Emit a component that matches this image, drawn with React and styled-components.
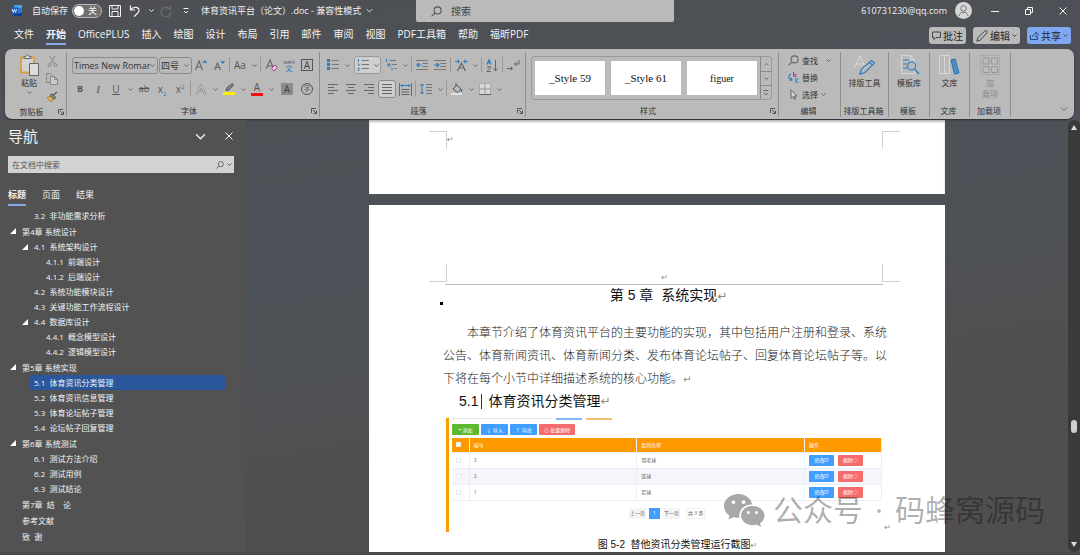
import styled, { createGlobalStyle } from 'styled-components';

const GlobalStyle = createGlobalStyle`
  * {
    box-sizing: border-box;
  }

  body {
    margin: 0;
    font-family: "Open Sans", "Noto Sans CJK SC", sans-serif;
    font-size: 8px;
    color: #222;
    background: #4e5256;
  }

  button, input, select {
    margin: 0;
    padding: 0;
    border: 0;
    background: none;
    font: inherit;
    color: inherit;
  }
`

/* ---------- window ---------- */

const Window = styled.div`
  display: flex;
  flex-direction: column;
  height: 100vh;
  overflow: hidden;
  background: linear-gradient(170deg, #4d4f54 0%, #4d5258 45%, #504f4f 75%, #504e4e 100%);
`

const TitleBar = styled.header`
  display: grid;
  grid-template-columns: 416px minmax(100px, 258px) 1fr;
  height: 22px;
  color: #f2f2f2;
  font-size: 9px;
  line-height: 20px;
`

const TitleSide = styled.div`
  display: flex;
  align-items: center;
  height: 21px;
  padding-left: 11px;
  white-space: nowrap;
`

const TitleEnd = styled(TitleSide)`
  justify-content: flex-end;
  gap: 8px;
`

const PlainButton = styled.button`
  display: flex;
  align-items: center;
  justify-content: center;
  width: ${({ $w }) => $w || 12}px;
  height: 16px;
  flex: none;
`

const AutoSave = styled.label`
  display: flex;
  align-items: center;
  gap: 4px;
  margin: 0 6px 0 10px;
`

const Switch = styled.span`
  display: flex;
  align-items: center;
  gap: 4px;
  width: 30px;
  height: 14px;
  padding-left: 1px;
  border: 1px solid #b8b8b8;
  border-radius: 7px;
  background: #6f6f6f;

  input {
    appearance: none;
    width: 10px;
    height: 10px;
    border-radius: 50%;
    background: #fff;
  }
`

const DocName = styled.span`
  margin: 0 5px 0 7px;
`

const TitleSearch = styled.label`
  display: flex;
  align-items: center;
  gap: 9px;
  padding-left: 15px;
  background: #bababa;
  border-radius: 0 0 2px 2px;
  color: #555;

  input {
    flex: 1;
    min-width: 0;
    font-size: 10px;
  }

  input::placeholder {
    color: #444;
    opacity: 1;
  }
`

const Avatar = styled.span`
  display: flex;
  width: 17px;
  height: 17px;
  border-radius: 50%;
  background: #d6d6d6;
`

const WindowButtons = styled.div`
  display: flex;
  gap: 12px;
  padding: 0 6px 0 4px;
`

/* ---------- tabs ---------- */

const MenuBar = styled.nav`
  display: flex;
  align-items: center;
  height: 27px;
  padding: 0 9px 0 14px;
`

const MenuTabs = styled.div`
  display: flex;
  flex: 1;
  gap: 12px;
`

const MenuTab = styled.button`
  height: 18px;
  padding-bottom: 2px;
  border-bottom: 2px solid ${({ $active }) => ($active ? '#86a9e6' : 'transparent')};
  color: #f5f5f5;
  font-size: 10px;
  font-weight: ${({ $active }) => ($active ? 700 : 400)};
  line-height: 14px;
  white-space: nowrap;
`

const MenuActions = styled.div`
  display: flex;
  gap: 7px;
`

const ActionButton = styled.button`
  display: flex;
  align-items: center;
  justify-content: center;
  gap: 2px;
  height: 17px;
  padding: 0 3px;
  border-radius: 3px;
  background: ${({ $primary }) => ($primary ? '#80a8f0' : '#bababa')};
  font-size: 10px;
  line-height: 16px;
  white-space: nowrap;

  svg {
    color: #444;
  }
`

/* ---------- ribbon ---------- */

const Ribbon = styled.section`
  display: flex;
  flex: none;
  height: 70px;
  margin: 0 6px 1px 5px;
  padding: 3px 0 2px;
  border-radius: 7px;
  background: #bababa;
  box-shadow: 0 1px 2px rgba(0, 0, 0, .5);
  color: #333;

  svg {
    color: #666;
  }
`

const Group = styled.div`
  display: flex;
  flex-direction: column;
  flex: none;
  width: ${({ $w }) => $w}px;
  padding-left: ${({ $pad }) => $pad || 0}px;
  border-right: 1px solid #8f8f8f;
`

const GroupBody = styled.div`
  flex: 1;
  display: flex;
  flex-direction: ${({ $column }) => ($column ? 'column' : 'row')};
`

const GroupLabel = styled.div`
  display: flex;
  align-items: center;
  height: 12px;
  padding-right: 2px;
  margin-left: -${({ $pad }) => $pad || 0}px;
  line-height: 12px;

  span {
    flex: 1;
    text-align: center;
    white-space: nowrap;
  }
`

const PasteButton = styled.button`
  display: flex;
  flex-direction: column;
  align-items: center;
  gap: 1px;
  width: 32px;
  padding-top: 2px;
  line-height: 12px;
`

const ToolStack = styled.div`
  display: flex;
  flex-direction: column;
`

const ToolRow = styled.div`
  display: flex;
  align-items: center;
  height: ${({ $h }) => $h || 24}px;
  margin-top: ${({ $top }) => $top || 0}px;
`

const Tool = styled.button`
  display: flex;
  align-items: center;
  justify-content: center;
  flex: none;
  width: ${({ $w }) => $w || 18}px;
  height: 18px;
  color: #555;
  font-size: 10px;
  line-height: 14px;

  sub, sup {
    color: #2b7cc0;
    font-size: 6px;
    line-height: 6px;
  }
`

const SplitTool = styled.div`
  display: flex;
  align-items: center;
  flex: none;
  margin: ${({ $on }) => ($on ? '0 1px 0 2px' : '0')};
  border-radius: 3px;
  background: ${({ $on }) => ($on ? '#cfcfcf' : 'none')};
  outline: ${({ $on }) => ($on ? '1px solid #999' : 'none')};
  outline-offset: -1px;
`

const PressedTool = styled(Tool)`
  border: 1px solid #8a8a8a;
  border-radius: 3px;
  background: #cfcfcf;
`

const Sep = styled.span`
  width: 1px;
  height: 16px;
  margin: 0 1px;
  background: #999;
`

const Combo = styled.label`
  display: flex;
  align-items: center;
  width: ${({ $w }) => $w}px;
  height: 17px;
  margin-left: 1px;
  padding: 0 2px 0 1px;
  border: 1px solid #8a8a8a;
  border-radius: 3px;

  select {
    appearance: none;
    flex: 1;
    min-width: 0;
    height: 15px;
    font-size: 9px;
    line-height: 15px;
    color: #333;
  }
`

const Glyph = styled.span`
  font-size: ${({ $size }) => $size || 11}px;
  font-weight: ${({ $bold }) => ($bold ? 700 : 400)};
  font-style: ${({ $italic }) => ($italic ? 'italic' : 'normal')};
  font-family: ${({ $serif }) => ($serif ? '"Liberation Serif", serif' : 'inherit')};
  text-decoration: ${({ $deco }) => $deco || 'none'};
`

const FontColor = styled.span`
  width: 12px;
  border-bottom: 3px solid #f01414;
  line-height: 11px;
`

const ShadedA = styled.span`
  width: 12px;
  height: 12px;
  background: ${({ $boxed }) => ($boxed ? 'none' : '#8c8c8c')};
  border: ${({ $boxed }) => ($boxed ? '1px solid #555' : '0')};
  color: #444;
  line-height: ${({ $boxed }) => ($boxed ? 10 : 12)}px;
`

const Pinyin = styled.span`
  display: flex;
  flex-direction: column;
  font-size: 6px;
  line-height: 6px;

  b {
    color: #2b7cc0;
    font-size: 7px;
    font-weight: 400;
    line-height: 7px;
  }
`

const Circled = styled.span`
  width: 12px;
  height: 12px;
  border: 1px solid #555;
  border-radius: 50%;
  font-size: 7px;
  line-height: 10px;
`

const Gallery = styled.div`
  display: flex;
  gap: 6px;
  height: 44px;
  margin-top: 4px;
  padding-left: 3px;
  border: 1px solid #999;
  border-radius: 3px;
`

const StyleCard = styled.button`
  width: 70px;
  height: 34px;
  margin-top: 4px;
  background: #fff;
  color: #111;
  font-family: "Liberation Serif", serif;
  font-size: ${({ $size }) => $size || 11}px;
`

const GalleryScroll = styled.div`
  display: grid;
  grid-template-rows: repeat(3, 1fr);
  width: 11px;
  margin-left: -3px;
  border-left: 1px solid #888;

  button {
    display: flex;
    align-items: center;
    justify-content: center;
  }

  button + button {
    border-top: 1px solid #888;
  }
`

const EditButton = styled.button`
  display: flex;
  align-items: center;
  gap: 3px;
  height: 17px;
  line-height: 16px;
`

const BigTool = styled.button`
  display: flex;
  flex-direction: column;
  align-items: center;
  gap: 2px;
  width: 100%;
  padding-top: 3px;
  color: ${({ disabled }) => (disabled ? '#8a8a8a' : '#333')};
  line-height: 11px;
  white-space: pre-line;
`

const RibbonEnd = styled.div`
  display: flex;
  flex: 1;
  align-items: flex-end;
  justify-content: flex-end;
  padding-right: 4px;
`

/* ---------- navigation pane ---------- */

const Workspace = styled.div`
  display: flex;
  flex: 1;
  min-height: 0;
`

const NavPane = styled.aside`
  flex: none;
  width: 246px;
  background: #525252;
  color: #f2f2f2;
`

const NavHead = styled.div`
  display: flex;
  align-items: center;
  height: 32px;
  padding: 0 11px 0 8px;
  gap: 17px;

  h2 {
    flex: 1;
    margin: 0;
    font-size: 15px;
    font-weight: 400;
    line-height: 20px;
  }
`

const NavSearch = styled.label`
  display: flex;
  align-items: center;
  gap: 3px;
  height: 17px;
  margin: 4px 12px 0 8px;
  padding: 0 2px 0 4px;
  background: #d3d3d3;
  color: #555;

  input {
    flex: 1;
    min-width: 0;
  }

  input::placeholder {
    color: #555;
    opacity: 1;
  }
`

const NavTabs = styled.div`
  display: flex;
  gap: 16px;
  padding: 13px 8px 0;
`

const NavTab = styled.button`
  height: 20px;
  padding-bottom: 1px;
  border-bottom: 2px solid ${({ $active }) => ($active ? '#86a9e6' : 'transparent')};
  font-size: 9px;
  font-weight: ${({ $active }) => ($active ? 700 : 400)};
  line-height: 14px;
`

const Outline = styled.ul`
  margin: 2px 20px 0 0;
  padding: 0;
  list-style: none;
`

const OutlineItem = styled.li`
  display: flex;
  align-items: center;
  height: ${({ $level }) => ($level === 0 ? 16 : 15)}px;
  margin-left: ${({ $level }) => 8 + $level * 12}px;
  background: linear-gradient(${({ $active }) => ($active ? '#2a569c, #2a569c' : 'transparent, transparent')}) 10px 0 no-repeat;

  a {
    color: inherit;
    line-height: 15px;
    text-decoration: none;
    white-space: pre;
  }
`

const Twisty = styled.span`
  display: flex;
  width: 14px;
  padding-left: 2px;
`

/* ---------- document ---------- */

const Canvas = styled.main`
  position: relative;
  display: flex;
  flex-direction: column;
  align-items: center;
  flex: 1;
  gap: 11px;
  min-width: 0;
  overflow: hidden;
`

const Page = styled.article`
  flex: none;
  width: 100%;
  max-width: 576px;
  background: #fff;
  color: #111;
`

const FirstPage = styled(Page)`
  height: 74px;
  padding-top: 11px;
  box-shadow: inset 0 2px 2px #bbb;
`

const SecondPage = styled(Page)`
  padding-top: 59px;
`

const MarginMarks = styled.div`
  display: flex;
  justify-content: space-between;
  align-items: ${({ $bottom }) => ($bottom ? 'flex-end' : 'center')};
  height: 18px;
  padding: 0 45px 0 60px;
`

const Corner = styled.span`
  width: 18px;
  height: 18px;
  border: 0 solid #d0d0d0;
  border-top-width: ${({ $v }) => ($v === 'top' ? 1 : 0)}px;
  border-bottom-width: ${({ $v }) => ($v === 'bottom' ? 1 : 0)}px;
  border-left-width: ${({ $h }) => ($h === 'left' ? 1 : 0)}px;
  border-right-width: ${({ $h }) => ($h === 'right' ? 1 : 0)}px;
`

const Return = styled.span`
  color: #8a8a8a;
  font-family: "DejaVu Sans", sans-serif;
  font-size: ${({ $size }) => $size || 8}px;
  font-weight: 400;
  line-height: 8px;
`

const CornerGroup = styled.div`
  display: flex;
  align-items: center;
`

const Content = styled.div`
  margin: 2px 62px 0 76px;
  border-top: 1px solid #bbb;
`

const Chapter = styled.h1`
  position: relative;
  margin: 0 0 16px;
  padding-left: 9px;
  font-family: "Liberation Sans", "Noto Sans CJK SC", sans-serif;
  font-size: 14px;
  font-weight: 400;
  line-height: 20px;
  text-align: center;
  white-space: pre;

  &::before {
    content: "";
    position: absolute;
    left: -5px;
    bottom: 0;
    width: 3px;
    height: 3px;
    background: #000;
  }
`

const Paragraph = styled.p`
  margin: 0 -6px 0 -2px;
  color: #222;
  font-size: 12px;
  font-weight: 300;
  line-height: 23px;
  text-indent: 24px;
  white-space: pre-line;
`

const Section = styled.h2`
  display: flex;
  align-items: center;
  height: 22px;
  margin: 0 0 6px;
  padding-left: 14px;
  font-family: "Liberation Sans", "Noto Sans CJK SC", sans-serif;
  font-size: 14px;
  font-weight: 400;
  line-height: 20px;
`

const Caret = styled.span`
  width: 1px;
  height: 15px;
  margin: 0 6px 0 3px;
  background: #333;
`

const Figure = styled.figure`
  margin: 0;
`

const FigureRow = styled.div`
  display: flex;
  align-items: flex-end;
  margin: 0 -8px 0 1px;
`

const AdminShot = styled.div`
  flex: 1;
  height: 114px;
  margin-right: 2px;
  padding-left: 3px;
  border-left: 3px solid #f90;
  color: #666;
  font-size: 5px;
  line-height: 6px;
`

const ShotTop = styled.div`
  display: flex;
  gap: 4px;
  height: 2px;

  i {
    width: 26px;
    background: #7db9f8;
  }

  i:first-child {
    width: 100px;
    border-top: 1px solid #e4e4e4;
    background: none;
  }

  i:last-child {
    background: #efc06d;
  }
`

const ShotButtons = styled.div`
  display: flex;
  gap: 2px;
  margin: 4px 0 3px;
`

const RowButtons = styled.div`
  display: flex;
  gap: 4px;
`

const ShotButton = styled.button`
  width: ${({ $w }) => $w}px;
  height: 11px;
  border-radius: 1px;
  background: ${({ $color }) => $color};
  color: #fff;
  white-space: nowrap;
`

const ShotTable = styled.table`
  width: 100%;
  table-layout: fixed;
  border-collapse: collapse;

  th, td {
    height: 16px;
    padding: 0 4px;
    border: 0 solid #ebeef5;
    border-right-width: 1px;
    border-bottom-width: 1px;
    text-align: left;
    font-weight: 400;
  }

  th {
    height: 14px;
    background: #f90;
    color: #fff;
  }

  tbody tr:nth-child(even) {
    background: #f4f6fb;
  }

  input {
    display: block;
    appearance: none;
    width: 5px;
    height: 5px;
    border: 1px solid #ececec;
    background: #fff;
  }
`

const Pager = styled.div`
  display: flex;
  justify-content: center;
  gap: 3px;
  margin-top: 7px;

  button, span {
    height: 11px;
    padding: 0 1px;
    background: #f4f4f5;
    line-height: 11px;
  }

  button[aria-current] {
    width: 11px;
    background: #409eff;
    color: #fff;
  }

  span {
    margin-left: 3px;
    border: 1px solid #f0f0f0;
    background: #fff;
    line-height: 9px;
  }
`

const Caption = styled.figcaption`
  height: 20px;
  padding: 5px 0 0 27px;
  font-family: "Liberation Sans", "Noto Sans CJK SC", sans-serif;
  font-size: 10px;
  line-height: 16px;
  text-align: center;
  white-space: pre;
`

const Watermark = styled.div`
  position: absolute;
  right: 23px;
  bottom: 20px;
  display: flex;
  align-items: center;
  gap: 12px;
  color: rgba(0, 0, 0, .32);
  font-size: 30px;
  line-height: 44px;
  white-space: nowrap;

  svg {
    margin-right: -4px;
  }
`

const ScrollBar = styled.div`
  display: flex;
  flex-direction: column;
  align-items: center;
  justify-content: space-between;
  flex: none;
  width: 12px;
  border-radius: 6px;
  background: #3a3a3a;
`

const Track = styled.div`
  display: grid;
  grid-template-rows: 285fr 13px 103fr;
  flex: 1;

  i {
    grid-row: 2;
    width: 6px;
    border-radius: 3px;
    background: #cfcfcf;
  }
`

const StatusEdge = styled.footer`
  flex: none;
  height: 3px;
  background: #4b4949;
`

/* ---------- icons ---------- */

const Svg = ({ w = 12, h, box, children, ...rest }) => (
  <svg
    width={w}
    height={h || w}
    viewBox={box || `0 0 ${w} ${h || w}`}
    fill="none"
    stroke="currentColor"
    aria-hidden="true"
    {...rest}
  >
    {children}
  </svg>
)

const Chevron = ({ w = 5, ...rest }) => (
  <Svg w={w} box="0 0 10 10" strokeWidth={w > 6 ? 1.2 : 2} {...rest}><path d="M1 3l4 4 4-4" /></Svg>
)

const Search = ({ w = 10 }) => (
  <Svg w={w} box="0 0 10 10"><circle cx="6" cy="4" r="3.2" /><path d="M3.7 6.3L.5 9.5" /></Svg>
)

const Close = ({ w = 8 }) => <Svg w={w} box="0 0 8 8"><path d="M.5.5l7 7M7.5.5l-7 7" /></Svg>

const WordLogo = () => (
  <Svg w={11} stroke="none">
    <path d="M3 0h8v11H3z" fill="#2b7cd3" />
    <path d="M3 0h8v3H3z" fill="#41a5ee" />
    <path d="M3 8h8v3H3z" fill="#103f91" />
    <path d="M0 2.5h7v6.5H0z" fill="#185abd" />
    <path d="M1.2 4l1 3.4L3.4 4.3l1.2 3.1 1-3.4" stroke="#fff" strokeWidth=".8" />
  </Svg>
)

const Save = () => (
  <Svg w={12}><path d="M.5.5h11v11H.5zM3 .5v3.500h6V.5M3 11.500v-5h6v5" /></Svg>
)

const Undo = () => <Svg w={12}><path d="M1.5.5v4.5H6M1.5 5C4 1.5 10 1.500 10 5.500 10 8 7 9.500 5 11.500" strokeWidth="1.2" /></Svg>

const Redo = () => <Svg w={12} stroke="#6c6e71"><path d="M10.500.5V4H7M10 4A5 5 0 1 0 11 6.500" strokeWidth="1.2" /></Svg>

const Person = () => (
  <Svg w={17} stroke="#777"><circle cx="8.500" cy="6.500" r="2.800" /><path d="M4 14c.5-5 8.500-5 9 0" /></Svg>
)

const Clipboard = () => (
  <Svg w={20} h={22}>
    <path d="M2 3.500h13v15H2z" fill="#d3d3d3" stroke="#d9a24a" strokeWidth="2" />
    <path d="M5 4.500V2.500h2C7 .5 10 .5 10 2.500h2v2z" fill="#ddd" stroke="#666" />
    <path d="M10.500 9.500h9v12h-9z" fill="#dcdcdc" stroke="#666" />
  </Svg>
)

const Scissors = () => (
  <Svg w={11} stroke="#888"><path d="M3 0l4.500 8M8 0L3.500 8" /><circle cx="2.500" cy="9" r="1.500" /><circle cx="8.500" cy="9" r="1.500" /></Svg>
)

const Copy = () => (
  <Svg w={12} stroke="#888"><path d="M4 9.500H.5v-9H5L7 2.500" /><path d="M4.500 3.500h4l3 3v5h-7zM8.500 3.500v3h3" fill="#ccc" /></Svg>
)

const Brush = () => (
  <Svg w={12}>
    <path d="M1 6.500l3.500-1.500 3 3L5 11z" fill="#e7b45c" stroke="#a8803c" />
    <path d="M4.500 4.500l1.500-1.500 3.500 3.500L8 8zM7.500 4L11 1" stroke="#555" strokeWidth="1.100" />
  </Svg>
)

const Launcher = () => (
  <Svg w={6} stroke="#555"><path d="M.5 5V.5H5M2 2l3 3M5.500 2.500v3h-3" /></Svg>
)

const Highlighter = () => (
  <Svg w={12}>
    <path d="M0 9h12v3H0z" fill="#ffec00" stroke="none" />
    <path d="M3 7.500l1-3L9.500.5l1 1.500L6 7z" fill="#888" stroke="#555" />
  </Svg>
)

const ClearFormat = () => (
  <Svg w={13}>
    <path d="M1 10L5 1l3 7M2.500 7H7" strokeWidth="1.100" />
    <path d="M6.500 9.500l3.500-3.500 2.500 2-3.500 4z" fill="#e7c9e0" stroke="#b2408c" />
  </Svg>
)

const SizedA = ({ up }) => (
  <Svg w={12}>
    <path d={up ? 'M.5 11L4 2l3.500 9M2 8h4' : 'M1.500 11L4.500 4l3 7M2.500 8.500h4'} strokeWidth="1.100" />
    <path d={up ? 'M8 4l1.800-2L11.500 4' : 'M8 2l1.800 2L11.500 2'} stroke="#2b7cc0" strokeWidth="1.200" />
  </Svg>
)

const List = ({ numbered }) => (
  <Svg w={12}>
    <path d="M4.500 1.500H12M4.500 5.500H12M4.500 9.500H12" stroke="#777" />
    {numbered
      ? <path d="M1.500 0v3M.5 5h1.500v2M.5 9h1.500v2.500H.5" stroke="#2b7cc0" />
      : <path d="M0 0h3v3H0zM0 4h3v3H0zM0 8h3v3H0z" fill="#2b7cc0" stroke="none" />}
  </Svg>
)

const MultiLevel = () => (
  <Svg w={12}>
    <path d="M4.500 1.500H11M7 5.500h5M9.500 9.500H12" stroke="#777" />
    <path d="M1.500 0v3M3 5h2v2H3zM7 8.500v3" stroke="#2b7cc0" />
  </Svg>
)

const Indent = ({ out }) => (
  <Svg w={12}>
    <path d="M0 1.500h12M6.500 4.500H12M6.500 7.500H12M0 10.500h12" stroke="#777" />
    <path d={out ? 'M5.500 6H1M3 4L1 6l2 2' : 'M0 6h4.500M2.800 4l2 2-2 2'} stroke="#2b7cc0" strokeWidth="1.200" />
  </Svg>
)

const AsianLayout = () => (
  <Svg w={13}>
    <path d="M2.500 12l4-8 4 8M4 9h5" strokeWidth="1.200" />
    <path d="M0 2.500h4M2.500.5l2 2-2 2M13 2.500H9M10.500.5l-2 2 2 2" stroke="#2b7cc0" />
  </Svg>
)

const Sort = () => (
  <Svg w={12} h={13}>
    <path d="M1 5.500L3 .8l2 4.700M1.800 4h2.500" stroke="#2b7cc0" strokeWidth="1.200" />
    <path d="M1 8h4l-4 4.500h4M9.500 1v11M7.500 9.500l2 2.500 2-2.500" />
  </Svg>
)

const Marks = () => (
  <Svg w={13}><path d="M0 9.500h5.500M3.500 7.500l2 2-2 2M12 1v4H7.500M9.500 3l-2 2 2 2" /></Svg>
)

const Lines = ({ d, w = 12 }) => <Svg w={w}><path d={d} stroke="#666" /></Svg>

const Distribute = () => (
  <Svg w={13}>
    <path d="M.5 0v13M12.500 0v13M2 2.500h9M3.500 1L2 2.500 3.500 4M9.500 1L11 2.500 9.500 4" stroke="#2b7cc0" />
    <path d="M2.500 6.500h8M2.500 9h8M2.500 11.500h8" stroke="#666" />
  </Svg>
)

const LineSpacing = () => (
  <Svg w={12}>
    <path d="M2 .8v10.400M.3 3L2 1l1.700 2M.3 9L2 11l1.700-2" stroke="#2b7cc0" />
    <path d="M6 1.500h6M6 4.500h6M6 7.500h6M6 10.500h6" stroke="#777" />
  </Svg>
)

const Bucket = () => (
  <Svg w={12}>
    <path d="M2 6l4-4 4 4-3.500 3.500zM5 0v3" stroke="#555" />
    <path d="M10.500 6v3" stroke="#2b7cc0" strokeWidth="1.500" />
    <path d="M0 10h11v2H0z" fill="#dedede" stroke="none" />
  </Svg>
)

const Borders = () => (
  <Svg w={12}>
    <path d="M.5.5h11v11H.5z" fill="#d8d8d8" stroke="#aaa" />
    <path d="M6 .5v11M.5 6h11" stroke="#999" />
    <path d="M0 11.500h12" stroke="#666" />
  </Svg>
)

const Replace = () => (
  <Svg w={11}>
    <path d="M5.500 0v4.500h2.500V2.500H5.500" stroke="#b2408c" />
    <path d="M3 2C0 3 0 7 3 8M1.500 8.500L4 8 3 5.500M10.500 7H8v3h2.500" stroke="#2b7cc0" strokeWidth="1.200" />
  </Svg>
)

const Pointer = () => <Svg w={11}><path d="M3 .8v8.700l2-2 1.500 3 1.200-.6L6.300 7H9z" fill="#d5d5d5" /></Svg>

const TypesetIcon = () => (
  <Svg w={21} h={20}>
    <path d="M.5 13L6 .8 11.500 13M2.500 9h7" stroke="#dadada" />
    <path d="M6 19l1.500-5L17.500 5.500l3 2.500L11 17.500zM15.500 7.500l3 2.500" stroke="#2b7cc0" strokeWidth="1.200" />
  </Svg>
)

const TemplateIcon = () => (
  <Svg w={21} h={20}>
    <path d="M2.500.5h9l4 4v14h-13zM11.500.5v4h4" stroke="#d6d6d6" />
    <path d="M4 5h6M4 9h4M4 13h4" stroke="#2b7cc0" strokeWidth="1.200" />
    <circle cx="12.500" cy="11" r="4" stroke="#2b7cc0" strokeWidth="1.200" />
    <path d="M15.500 14l4.500 5" stroke="#2b7cc0" strokeWidth="1.400" />
  </Svg>
)

const LibraryIcon = () => (
  <Svg w={21} h={20}>
    <path d="M.5.5h5v18h-5zM5.500.5h5v18h-5z" stroke="#d6d6d6" />
    <path d="M12 5l4-1 4 14-4.500 1z" fill="#4a90d0" stroke="#2b6ca8" />
  </Svg>
)

const AddinIcon = () => (
  <Svg w={20}>
    <path d="M.5.5h19v19H.5z" stroke="#aaa" />
    <path d="M3 3h6v6H3zM11.500 3h6v6h-6zM3 11.500h6v6H3zM11.500 11.500h6v6h-6z" stroke="#999" />
  </Svg>
)

const CommentIcon = () => <Svg w={9}><path d="M.5 1h8v5.500H4L2 8.500v-2H.5z" /></Svg>
const PencilIcon = () => <Svg w={12}><path d="M.8 11.200l1-3.500L9 .8c1-1 3 1 2 2L4.300 10.200z" /></Svg>
const ShareIcon = () => <Svg w={9}><path d="M.5 4v4.500h7V6M2.500 6C3 3.500 4.500 3 6 3V1l2.700 2.800L6 6.200V4.500" stroke="#274a80" /></Svg>

const WeChat = () => (
  <Svg w={41} h={33} stroke="none" fill="#a8a8a8">
    <path
      fillRule="evenodd"
      d="M14.500 0C6.500 0 0 5.200 0 12c0 3.900 2.100 7.200 5.400 9.400L4.500 25.500l5-2.500c1.700.5 3.400.8 5 .8h1C14 16.500 20 10.500 28.300 10.600 27 4.500 21.300 0 14.500 0zM9.500 6.200a1.900 1.900 0 1 1 0 3.800 1.900 1.900 0 0 1 0-3.800zm10 0a1.900 1.900 0 1 1 0 3.800 1.900 1.900 0 0 1 0-3.800z"
    />
    <path
      fillRule="evenodd"
      d="M28.500 12C22 12 17 16.300 17 21.600s5 9.600 11.500 9.600c1.400 0 2.700-.2 4-.6l4.500 2.300-1-3.600c2.700-1.900 4.500-4.600 4.500-7.700C40.500 16.300 35 12 28.500 12zm-4.200 5a1.500 1.500 0 1 1 0 3 1.500 1.500 0 0 1 0-3zm8.200 0a1.500 1.500 0 1 1 0 3 1.500 1.500 0 0 1 0-3z"
    />
  </Svg>
)

/* ---------- data ---------- */

const MENU = ['文件', '开始', 'OfficePLUS', '插入', '绘图', '设计', '布局', '引用', '邮件', '审阅', '视图', 'PDF工具箱', '帮助', '福昕PDF']

const OUTLINE = [
  [1, '3.2  非功能需求分析'],
  [0, '第4章 系统设计', true],
  [1, '4.1  系统架构设计', true],
  [2, '4.1.1  前端设计'],
  [2, '4.1.2  后端设计'],
  [1, '4.2  系统功能模块设计'],
  [1, '4.3  关键功能工作流程设计'],
  [1, '4.4  数据库设计', true],
  [2, '4.4.1  概念模型设计'],
  [2, '4.4.2  逻辑模型设计'],
  [0, '第5章 系统实现', true],
  [1, '5.1  体育资讯分类管理'],
  [1, '5.2  体育资讯信息管理'],
  [1, '5.3  体育论坛帖子管理'],
  [1, '5.4  论坛帖子回复管理'],
  [0, '第6章 系统测试', true],
  [1, '6.1  测试方法介绍'],
  [1, '6.2  测试用例'],
  [1, '6.3  测试结论'],
  [0, '第7章  结    论'],
  [0, '参考文献'],
  [0, '致  谢'],
]

const ROWS = [['3', '羽毛球'], ['2', '篮球'], ['1', '足球']]

const BODY_TEXT = `本章节介绍了体育资讯平台的主要功能的实现，其中包括用户注册和登录、系统
公告、体育新闻资讯、体育新闻分类、发布体育论坛帖子、回复体育论坛帖子等。以
下将在每个小节中详细描述系统的核心功能。`

/* ---------- parts ---------- */

function Split({ label, on, children }) {
  return (
    <SplitTool $on={on}>
      <Tool aria-label={label} $w={on ? 17 : 18}>{children}</Tool>
      <Tool aria-label={`${label}选项`} $w={10}><Chevron /></Tool>
    </SplitTool>
  )
}

function Label({ children, pad, launcher }) {
  return (
    <GroupLabel $pad={pad}>
      <span>{children}</span>
      {launcher && <PlainButton $w={6} aria-label={`${children}设置`}><Launcher /></PlainButton>}
    </GroupLabel>
  )
}

function BigGroup({ w, icon, text, label, disabled }) {
  return (
    <Group $w={w}>
      <GroupBody><BigTool disabled={disabled}>{icon}{text}</BigTool></GroupBody>
      <Label>{label}</Label>
    </Group>
  )
}

function Title() {
  return (
    <TitleBar>
      <TitleSide>
        <WordLogo />
        <AutoSave>
          自动保存
          <Switch><input type="checkbox" role="switch" />关</Switch>
        </AutoSave>
        <PlainButton $w={14} aria-label="保存"><Save /></PlainButton>
        <PlainButton $w={26} aria-label="撤消"><Undo /></PlainButton>
        <PlainButton $w={6} aria-label="撤消选项"><Chevron /></PlainButton>
        <PlainButton $w={24} aria-label="恢复"><Redo /></PlainButton>
        <PlainButton $w={16} aria-label="自定义快速访问工具栏">
          <Svg w={6}><path d="M.5.5h5M1 3l2 2 2-2" /></Svg>
        </PlainButton>
        <DocName>体育资讯平台（论文）.doc - 兼容性模式</DocName>
        <Chevron w={7} />
      </TitleSide>
      <TitleSearch>
        <Search w={11} />
        <input aria-label="搜索" placeholder="搜索" />
      </TitleSearch>
      <TitleEnd>
        610731230@qq.com
        <Avatar><Person /></Avatar>
        <WindowButtons>
          <PlainButton $w={22} aria-label="最小化"><Svg w={8}><path d="M0 4.500h8" /></Svg></PlainButton>
          <PlainButton $w={22} aria-label="还原"><Svg w={8}><path d="M.5 2.500h5v5h-5zM2.500 2V.5h5v5H6" /></Svg></PlainButton>
          <PlainButton $w={22} aria-label="关闭"><Close /></PlainButton>
        </WindowButtons>
      </TitleEnd>
    </TitleBar>
  )
}

function Menu() {
  return (
    <MenuBar>
      <MenuTabs>
        {MENU.map((name) => <MenuTab key={name} $active={name === '开始'}>{name}</MenuTab>)}
      </MenuTabs>
      <MenuActions>
        <ActionButton><CommentIcon />批注</ActionButton>
        <ActionButton><PencilIcon />编辑<Chevron /></ActionButton>
        <ActionButton $primary><ShareIcon />共享<Chevron /></ActionButton>
      </MenuActions>
    </MenuBar>
  )
}

function FontGroup() {
  return (
    <Group $w={253} $pad={4}>
      <GroupBody $column>
        <ToolRow $top={1}>
          <Combo $w={86}>
            <select aria-label="字体"><option>Times New Romar</option></select>
            <Chevron />
          </Combo>
          <Combo $w={33}>
            <select aria-label="字号"><option>四号</option></select>
            <Chevron />
          </Combo>
          <Tool aria-label="增大字号"><SizedA up /></Tool>
          <Tool aria-label="减小字号"><SizedA /></Tool>
          <Sep />
          <Split label="更改大小写">Aa</Split>
          <Sep />
          <Tool aria-label="清除格式"><ClearFormat /></Tool>
          <Tool aria-label="拼音指南"><Pinyin>wén<b>文</b></Pinyin></Tool>
          <Tool aria-label="字符边框"><ShadedA $boxed>A</ShadedA></Tool>
        </ToolRow>
        <ToolRow>
          <Tool aria-label="加粗"><Glyph $bold $size={9}>B</Glyph></Tool>
          <Tool aria-label="倾斜"><Glyph $italic $serif>I</Glyph></Tool>
          <Split label="下划线"><Glyph $deco="underline" $size={10}>U</Glyph></Split>
          <Tool aria-label="删除线"><Glyph $deco="line-through" $size={9}>ab</Glyph></Tool>
          <Tool aria-label="下标"><span>x<sub>2</sub></span></Tool>
          <Tool aria-label="上标"><span>x<sup>2</sup></span></Tool>
          <Sep />
          <Split label="文本效果">
            <Svg w={12}><path d="M1 11L6 1l5 10H9L6 4.500 3 11zM4 8h4" stroke="#999" fill="#ccc" /></Svg>
          </Split>
          <Split label="突出显示"><Highlighter /></Split>
          <Split label="字体颜色"><FontColor>A</FontColor></Split>
          <Tool aria-label="字符底纹" $w={22}><ShadedA>A</ShadedA></Tool>
          <Tool aria-label="带圈字符"><Circled>字</Circled></Tool>
        </ToolRow>
      </GroupBody>
      <Label pad={4} launcher>字体</Label>
    </Group>
  )
}

function ParagraphGroup() {
  return (
    <Group $w={206} $pad={4}>
      <GroupBody $column>
        <ToolRow $top={1}>
          <Split label="项目符号"><List /></Split>
          <Split label="编号" on><List numbered /></Split>
          <Split label="多级列表"><MultiLevel /></Split>
          <Sep />
          <Tool aria-label="减少缩进"><Indent out /></Tool>
          <Tool aria-label="增加缩进"><Indent /></Tool>
          <Sep />
          <Split label="中文版式"><AsianLayout /></Split>
          <Sep />
          <Tool aria-label="排序"><Sort /></Tool>
          <Sep />
          <Tool aria-label="显示编辑标记"><Marks /></Tool>
        </ToolRow>
        <ToolRow>
          <Tool aria-label="左对齐"><Lines d="M1 1.500h10M1 4.500h6M1 7.500h10M1 10.500h6" /></Tool>
          <Tool aria-label="居中"><Lines d="M1 1.500h10M3 4.500h6M1 7.500h10M3 10.500h6" /></Tool>
          <Tool aria-label="右对齐"><Lines d="M1 1.500h10M5 4.500h6M1 7.500h10M5 10.500h6" /></Tool>
          <PressedTool aria-label="两端对齐"><Lines d="M1 1.500h10M1 4.500h10M1 7.500h10M1 10.500h10" /></PressedTool>
          <Tool aria-label="分散对齐"><Distribute /></Tool>
          <Sep />
          <Split label="行距"><LineSpacing /></Split>
          <Sep />
          <Split label="底纹"><Bucket /></Split>
          <Split label="边框"><Borders /></Split>
        </ToolRow>
      </GroupBody>
      <Label pad={4} launcher>段落</Label>
    </Group>
  )
}

function RibbonBar() {
  return (
    <Ribbon>
      <Group $w={62} $pad={8}>
        <GroupBody>
          <PasteButton><Clipboard />粘贴<Chevron /></PasteButton>
          <ToolStack>
            <Tool aria-label="剪切" $w={14}><Scissors /></Tool>
            <Tool aria-label="复制" $w={14}><Copy /></Tool>
            <Tool aria-label="格式刷" $w={14}><Brush /></Tool>
          </ToolStack>
        </GroupBody>
        <Label pad={8} launcher>剪贴板</Label>
      </Group>
      <FontGroup />
      <ParagraphGroup />
      <Group $w={253} $pad={5}>
        <GroupBody>
          <Gallery>
            <StyleCard>_Style 59</StyleCard>
            <StyleCard>_Style 61</StyleCard>
            <StyleCard $size={10}>figuer</StyleCard>
            <GalleryScroll>
              <button aria-label="上一行"><Svg w={5} box="0 0 10 10" strokeWidth="1.500"><path d="M1 7l4-4 4 4" /></Svg></button>
              <button aria-label="下一行"><Chevron /></button>
              <button aria-label="更多样式"><Svg w={6}><path d="M.5.5h5M1 3l2 2 2-2" /></Svg></button>
            </GalleryScroll>
          </Gallery>
        </GroupBody>
        <Label pad={5} launcher>样式</Label>
      </Group>
      <Group $w={62} $pad={9}>
        <GroupBody $column>
          <EditButton><Search w={11} />查找<PlainButton as="span" $w={14}><Chevron /></PlainButton></EditButton>
          <EditButton><Replace />替换</EditButton>
          <EditButton><Pointer />选择<Chevron /></EditButton>
        </GroupBody>
        <Label pad={9}>编辑</Label>
      </Group>
      <BigGroup w={48} icon={<TypesetIcon />} text="排版工具" label="排版工具箱" />
      <BigGroup w={41} icon={<TemplateIcon />} text="模板库" label="模板" />
      <BigGroup w={40} icon={<LibraryIcon />} text="文库" label="文库" />
      <BigGroup w={41} icon={<AddinIcon />} text={'加\n载项'} label="加载项" disabled />
      <RibbonEnd>
        <PlainButton aria-label="折叠功能区"><Chevron w={8} /></PlainButton>
      </RibbonEnd>
    </Ribbon>
  )
}

function Navigation() {
  return (
    <NavPane>
      <NavHead>
        <h2>导航</h2>
        <PlainButton aria-label="选项"><Chevron w={11} /></PlainButton>
        <PlainButton aria-label="关闭导航"><Close /></PlainButton>
      </NavHead>
      <NavSearch>
        <input aria-label="在文档中搜索" placeholder="在文档中搜索" />
        <Search w={8} />
        <Chevron />
      </NavSearch>
      <NavTabs>
        <NavTab $active>标题</NavTab>
        <NavTab>页面</NavTab>
        <NavTab>结果</NavTab>
      </NavTabs>
      <Outline>
        {OUTLINE.map(([level, text, open]) => (
          <OutlineItem key={text} $level={level} $active={text.startsWith('5.1')}>
            <Twisty>{open && <Svg w={6} stroke="none"><path d="M6 0v6H0z" fill="#fff" /></Svg>}</Twisty>
            <a href="#outline">{text}</a>
          </OutlineItem>
        ))}
      </Outline>
    </NavPane>
  )
}

function AdminPanel() {
  return (
    <AdminShot>
      <ShotTop><i /><i /><i /></ShotTop>
      <ShotButtons>
        <ShotButton $w={27} $color="#5cb930">+ 添加</ShotButton>
        <ShotButton $w={27} $color="#409eff">↓ 导入</ShotButton>
        <ShotButton $w={27} $color="#409eff">↑ 导出</ShotButton>
        <ShotButton $w={36} $color="#f56c6c">⊙ 批量删除</ShotButton>
      </ShotButtons>
      <ShotTable>
        <colgroup>
          <col style={{ width: '4%' }} />
          <col style={{ width: '39%' }} />
          <col style={{ width: '39%' }} />
          <col />
        </colgroup>
        <thead>
          <tr>
            <th><input type="checkbox" aria-label="全选" /></th>
            <th>编号</th>
            <th>类别名称</th>
            <th>操作</th>
          </tr>
        </thead>
        <tbody>
          {ROWS.map(([id, name]) => (
            <tr key={id}>
              <td><input type="checkbox" aria-label={name} /></td>
              <td>{id}</td>
              <td>{name}</td>
              <td>
                <RowButtons>
                  <ShotButton $w={25} $color="#409eff">修改☑</ShotButton>
                  <ShotButton $w={25} $color="#f56c6c">删除◇</ShotButton>
                </RowButtons>
              </td>
            </tr>
          ))}
        </tbody>
      </ShotTable>
      <Pager>
        <button>上一页</button>
        <button aria-current="page">1</button>
        <button>下一页</button>
        <span>共 3 条</span>
      </Pager>
    </AdminShot>
  )
}

function Document() {
  return (
    <Canvas>
      <FirstPage>
        <MarginMarks>
          <CornerGroup><Corner $v="top" $h="right" /><Return>↵</Return></CornerGroup>
          <Corner $v="top" $h="left" />
        </MarginMarks>
      </FirstPage>
      <SecondPage>
        <MarginMarks $bottom>
          <Corner $v="bottom" $h="right" />
          <Return>↵</Return>
          <Corner $v="bottom" $h="left" />
        </MarginMarks>
        <Content>
          <Chapter>第 5 章  系统实现<Return $size={12}>↵</Return></Chapter>
          <Paragraph>{BODY_TEXT}<Return $size={10}>↵</Return></Paragraph>
          <Section>5.1<Caret />体育资讯分类管理<Return $size={12}>↵</Return></Section>
          <Figure>
            <FigureRow><AdminPanel /><Return>↵</Return></FigureRow>
            <Caption>图 5-2  替他资讯分类管理运行截图<Return>↵</Return></Caption>
          </Figure>
        </Content>
      </SecondPage>
      <Watermark>
        <WeChat />
        <span>公众号</span>
        <span>·</span>
        <span>码蜂窝源码</span>
      </Watermark>
    </Canvas>
  )
}

export default function App() {
  return (
    <Window>
      <GlobalStyle />
      <Title />
      <Menu />
      <RibbonBar />
      <Workspace>
        <Navigation />
        <Document />
        <ScrollBar>
          <PlainButton aria-label="向上滚动"><Svg w={6} stroke="none"><path d="M3 0l3 5H0z" fill="#ddd" /></Svg></PlainButton>
          <Track><i /></Track>
          <PlainButton aria-label="向下滚动"><Svg w={6} stroke="none"><path d="M3 6l3-5H0z" fill="#ddd" /></Svg></PlainButton>
        </ScrollBar>
      </Workspace>
      <StatusEdge />
    </Window>
  )
}
